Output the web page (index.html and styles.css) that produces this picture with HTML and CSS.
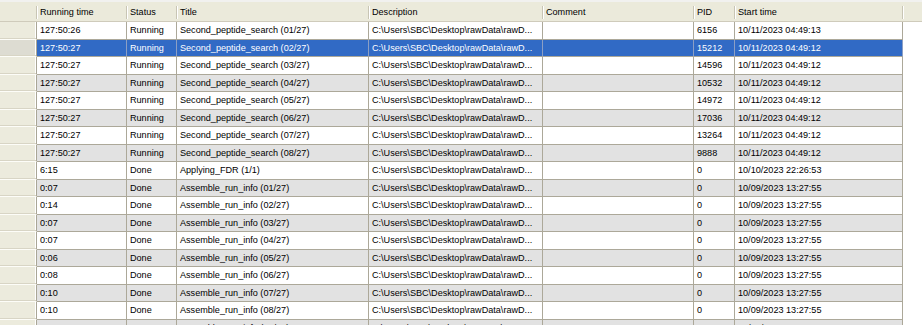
FILE: index.html
```html
<!DOCTYPE html>
<html>
<head>
<meta charset="utf-8">
<link rel="stylesheet" href="styles.css">
</head>
<body>
<div class="grid">
  <div class="topstrip"></div>
  <div class="row head">
    <div class="hc rh"></div>
    <div class="hc">Running time</div>
    <div class="hc">Status</div>
    <div class="hc">Title</div>
    <div class="hc">Description</div>
    <div class="hc">Comment</div>
    <div class="hc">PID</div>
    <div class="hc">Start time</div>
    <div class="hc fill"></div>
  </div>
  <div class="row w"><div class="rh"></div><div class="c">127:50:26</div><div class="c">Running</div><div class="c">Second_peptide_search (01/27)</div><div class="c">C:\Users\SBC\Desktop\rawData\rawD...</div><div class="c"></div><div class="c">6156</div><div class="c">10/11/2023 04:49:13</div><div class="f"></div></div>
  <div class="row sel"><div class="rh"></div><div class="c">127:50:27</div><div class="c">Running</div><div class="c">Second_peptide_search (02/27)</div><div class="c">C:\Users\SBC\Desktop\rawData\rawD...</div><div class="c"></div><div class="c">15212</div><div class="c">10/11/2023 04:49:12</div><div class="f"></div></div>
  <div class="row w"><div class="rh"></div><div class="c">127:50:27</div><div class="c">Running</div><div class="c">Second_peptide_search (03/27)</div><div class="c">C:\Users\SBC\Desktop\rawData\rawD...</div><div class="c"></div><div class="c">14596</div><div class="c">10/11/2023 04:49:12</div><div class="f"></div></div>
  <div class="row g"><div class="rh"></div><div class="c">127:50:27</div><div class="c">Running</div><div class="c">Second_peptide_search (04/27)</div><div class="c">C:\Users\SBC\Desktop\rawData\rawD...</div><div class="c"></div><div class="c">10532</div><div class="c">10/11/2023 04:49:12</div><div class="f"></div></div>
  <div class="row w"><div class="rh"></div><div class="c">127:50:27</div><div class="c">Running</div><div class="c">Second_peptide_search (05/27)</div><div class="c">C:\Users\SBC\Desktop\rawData\rawD...</div><div class="c"></div><div class="c">14972</div><div class="c">10/11/2023 04:49:12</div><div class="f"></div></div>
  <div class="row g"><div class="rh"></div><div class="c">127:50:27</div><div class="c">Running</div><div class="c">Second_peptide_search (06/27)</div><div class="c">C:\Users\SBC\Desktop\rawData\rawD...</div><div class="c"></div><div class="c">17036</div><div class="c">10/11/2023 04:49:12</div><div class="f"></div></div>
  <div class="row w"><div class="rh"></div><div class="c">127:50:27</div><div class="c">Running</div><div class="c">Second_peptide_search (07/27)</div><div class="c">C:\Users\SBC\Desktop\rawData\rawD...</div><div class="c"></div><div class="c">13264</div><div class="c">10/11/2023 04:49:12</div><div class="f"></div></div>
  <div class="row g"><div class="rh"></div><div class="c">127:50:27</div><div class="c">Running</div><div class="c">Second_peptide_search (08/27)</div><div class="c">C:\Users\SBC\Desktop\rawData\rawD...</div><div class="c"></div><div class="c">9888</div><div class="c">10/11/2023 04:49:12</div><div class="f"></div></div>
  <div class="row w"><div class="rh"></div><div class="c">6:15</div><div class="c">Done</div><div class="c">Applying_FDR (1/1)</div><div class="c">C:\Users\SBC\Desktop\rawData\rawD...</div><div class="c"></div><div class="c">0</div><div class="c">10/10/2023 22:26:53</div><div class="f"></div></div>
  <div class="row g"><div class="rh"></div><div class="c">0:07</div><div class="c">Done</div><div class="c">Assemble_run_info (01/27)</div><div class="c">C:\Users\SBC\Desktop\rawData\rawD...</div><div class="c"></div><div class="c">0</div><div class="c">10/09/2023 13:27:55</div><div class="f"></div></div>
  <div class="row w"><div class="rh"></div><div class="c">0:14</div><div class="c">Done</div><div class="c">Assemble_run_info (02/27)</div><div class="c">C:\Users\SBC\Desktop\rawData\rawD...</div><div class="c"></div><div class="c">0</div><div class="c">10/09/2023 13:27:55</div><div class="f"></div></div>
  <div class="row g"><div class="rh"></div><div class="c">0:07</div><div class="c">Done</div><div class="c">Assemble_run_info (03/27)</div><div class="c">C:\Users\SBC\Desktop\rawData\rawD...</div><div class="c"></div><div class="c">0</div><div class="c">10/09/2023 13:27:55</div><div class="f"></div></div>
  <div class="row w"><div class="rh"></div><div class="c">0:07</div><div class="c">Done</div><div class="c">Assemble_run_info (04/27)</div><div class="c">C:\Users\SBC\Desktop\rawData\rawD...</div><div class="c"></div><div class="c">0</div><div class="c">10/09/2023 13:27:55</div><div class="f"></div></div>
  <div class="row g"><div class="rh"></div><div class="c">0:06</div><div class="c">Done</div><div class="c">Assemble_run_info (05/27)</div><div class="c">C:\Users\SBC\Desktop\rawData\rawD...</div><div class="c"></div><div class="c">0</div><div class="c">10/09/2023 13:27:55</div><div class="f"></div></div>
  <div class="row w"><div class="rh"></div><div class="c">0:08</div><div class="c">Done</div><div class="c">Assemble_run_info (06/27)</div><div class="c">C:\Users\SBC\Desktop\rawData\rawD...</div><div class="c"></div><div class="c">0</div><div class="c">10/09/2023 13:27:55</div><div class="f"></div></div>
  <div class="row g"><div class="rh"></div><div class="c">0:10</div><div class="c">Done</div><div class="c">Assemble_run_info (07/27)</div><div class="c">C:\Users\SBC\Desktop\rawData\rawD...</div><div class="c"></div><div class="c">0</div><div class="c">10/09/2023 13:27:55</div><div class="f"></div></div>
  <div class="row w"><div class="rh"></div><div class="c">0:10</div><div class="c">Done</div><div class="c">Assemble_run_info (08/27)</div><div class="c">C:\Users\SBC\Desktop\rawData\rawD...</div><div class="c"></div><div class="c">0</div><div class="c">10/09/2023 13:27:55</div><div class="f"></div></div>
  <div class="row g"><div class="rh"></div><div class="c">0:10</div><div class="c">Done</div><div class="c">Assemble_run_info (09/27)</div><div class="c">C:\Users\SBC\Desktop\rawData\rawD...</div><div class="c"></div><div class="c">0</div><div class="c">10/09/2023 13:28:03</div><div class="f"></div></div>
</div>
</body>
</html>
```
FILE: styles.css
```css
html, body {
  margin: 0;
  padding: 0;
  background: #ffffff;
  overflow: hidden;
}
.grid {
  width: 922px;
  height: 325px;
  overflow: hidden;
  font-family: "Liberation Sans", Arial, sans-serif;
  font-size: 9.1px;
  color: #000;
  display: flex;
  flex-direction: column;
}
.topstrip {
  height: 2px;
  flex: none;
  background: #f1f1ef;
}
.row {
  flex: none;
  display: grid;
  grid-template-columns: 37px 90px 50px 192px 174px 151px 41px 168px 1fr;
  height: 17.5px;
}
.row > div {
  box-sizing: border-box;
  white-space: nowrap;
  overflow: hidden;
  display: flex;
  align-items: center;
}
.row.head {
  height: 20px;
}
.hc {
  background-color: #ebeadb;
  border-bottom: 1px solid #cfcbbb;
  padding-left: 3px;
  background-image: linear-gradient(#c8c5b4, #c8c5b4), linear-gradient(#ffffff, #ffffff);
  background-repeat: no-repeat;
  background-size: 1px 13px, 1px 13px;
  background-position: right 0 top 4px, left 0 top 4px;
}
.hc.rh {
  background-image: linear-gradient(#c8c5b4, #c8c5b4);
  background-position: right 0 top 4px;
}
.hc.fill {
  background-image: linear-gradient(#ffffff, #ffffff);
  background-position: left 0 top 4px;
}
.row:not(.head) > .rh {
  background: #ecebdd;
  border-right: 1px solid #a9a696;
  border-bottom: 1px solid #fdfdf8;
  box-shadow: inset 0 -1px #d8d5c5, inset -1px 0 #ffffff;
}
.row.sel > .rh {
  background: #dddcd2;
}
.c {
  padding-left: 3px;
  border-right: 1px solid #aca899;
  border-bottom: 1px solid #aca899;
}
.w > .c {
  background: #ffffff;
}
.g > .c {
  background: #e2e2e2;
}
.sel > .c {
  background: #316ac5;
  color: #ffffff;
  border-right-color: #8c9fc4;
}
.f {
  background: #ffffff;
}
```
